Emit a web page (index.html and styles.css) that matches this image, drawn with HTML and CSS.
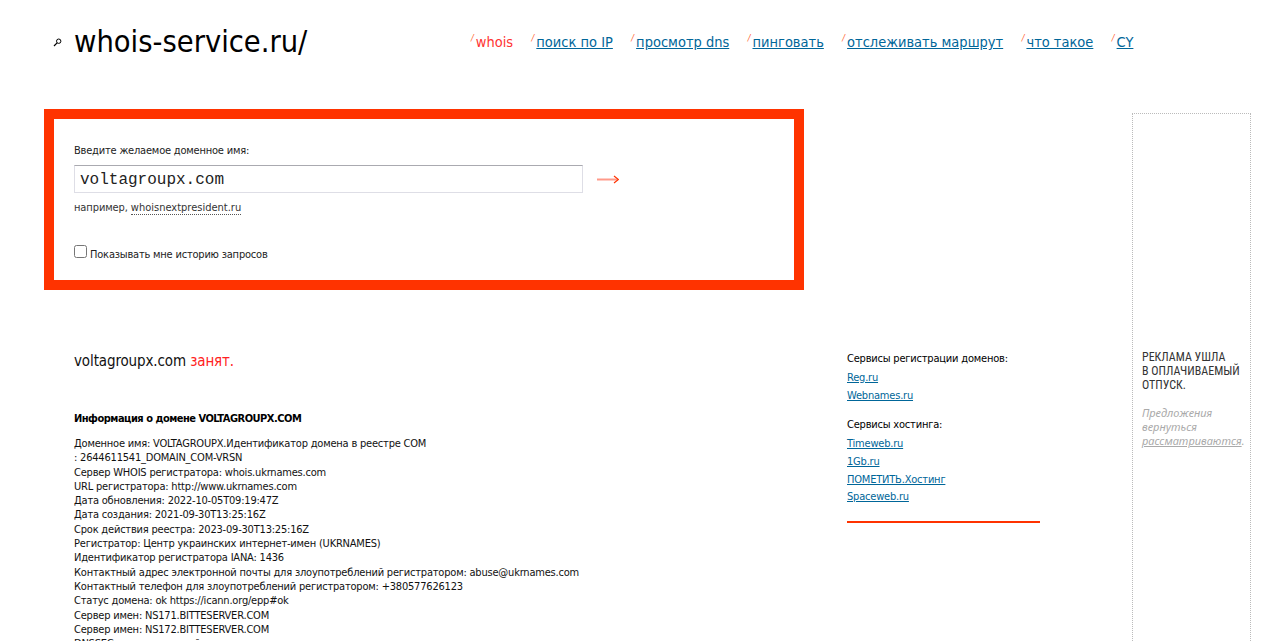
FILE: index.html
```html
<!DOCTYPE html>
<html lang="ru">
<head>
<meta charset="utf-8">
<title>whois-service.ru</title>
<link rel="stylesheet" href="styles.css">
</head>
<body>
<header class="header">
  <a class="logo" href="#">
    <svg class="logo-icon" width="9" height="9" viewBox="0 0 9 9"><circle cx="5.7" cy="3.2" r="2.2" fill="none" stroke="#000" stroke-width="1"/><path d="M4.1 4.9L1 8" stroke="#000" stroke-width="1.2"/></svg>
    <span class="logo-text">whois-service.ru/</span>
  </a>
  <nav class="nav">
    <span class="nav-item"><i class="slash">/</i><span class="current">whois</span></span>
    <span class="nav-item"><i class="slash">/</i><a href="#">поиск по IP</a></span>
    <span class="nav-item"><i class="slash">/</i><a href="#">просмотр dns</a></span>
    <span class="nav-item"><i class="slash">/</i><a href="#">пинговать</a></span>
    <span class="nav-item"><i class="slash">/</i><a href="#">отслеживать маршрут</a></span>
    <span class="nav-item"><i class="slash">/</i><a href="#">что такое</a></span>
    <span class="nav-item"><i class="slash">/</i><a href="#">CY</a></span>
  </nav>
</header>
<div class="page">
  <div class="left">
    <form class="search">
      <label class="search-label" for="domain">Введите желаемое доменное имя:</label>
      <div class="search-row">
        <input class="search-input" id="domain" type="text" value="voltagroupx.com">
        <svg class="arrow" width="22" height="9" viewBox="0 0 22 9"><path d="M0 4.5H21" stroke="#ff9a8a" stroke-width="2"/><path d="M17 1L21.5 4.5L17 8" fill="none" stroke="#ff3300" stroke-width="1.2"/></svg>
      </div>
      <p class="example">например, <a href="#">whoisnextpresident.ru</a></p>
      <label class="history"><input type="checkbox"><span>Показывать мне историю запросов</span></label>
    </form>
    <main class="result">
      <h1 class="status">voltagroupx.com <span class="busy">занят.</span></h1>
      <h2 class="info-title">Информация о домене VOLTAGROUPX.COM</h2>
      <p class="info">Доменное имя: VOLTAGROUPX.Идентификатор домена в реестре COM<br>
: 2644611541_DOMAIN_COM-VRSN<br>
Сервер WHOIS регистратора: whois.ukrnames.com<br>
URL регистратора: http://www.ukrnames.com<br>
Дата обновления: 2022-10-05T09:19:47Z<br>
Дата создания: 2021-09-30T13:25:16Z<br>
Срок действия реестра: 2023-09-30T13:25:16Z<br>
Регистратор: Центр украинских интернет-имен (UKRNAMES)<br>
Идентификатор регистратора IANA: 1436<br>
Контактный адрес электронной почты для злоупотреблений регистратором: abuse@ukrnames.com<br>
Контактный телефон для злоупотреблений регистратором: +380577626123<br>
Статус домена: ok https://icann.org/epp#ok<br>
Сервер имен: NS171.BITTESERVER.COM<br>
Сервер имен: NS172.BITTESERVER.COM<br>
DNSSEC: неподписанный</p>
    </main>
  </div>
  <aside class="services">
    <h3 class="services-title">Сервисы регистрации доменов:</h3>
    <a class="service" href="#">Reg.ru</a>
    <a class="service" href="#">Webnames.ru</a>
    <h3 class="services-title second">Сервисы хостинга:</h3>
    <a class="service" href="#">Timeweb.ru</a>
    <a class="service" href="#">1Gb.ru</a>
    <a class="service" href="#">ПОМЕТИТЬ.Хостинг</a>
    <a class="service" href="#">Spaceweb.ru</a>
    <div class="rule"></div>
  </aside>
  <aside class="ad">
    <p class="ad-title">РЕКЛАМА УШЛА<br>В ОПЛАЧИВАЕМЫЙ<br>ОТПУСК.</p>
    <p class="ad-note">Предложения вернуться <a href="#">рассматриваются</a>.</p>
  </aside>
</div>
</body>
</html>
```
FILE: styles.css
```css
html, body { margin: 0; padding: 0; height: 641px; overflow: hidden; background: #fff; }
body { font-family: "DejaVu Sans Condensed", "DejaVu Sans", sans-serif; font-stretch: condensed; font-size: 11px; letter-spacing: -0.2px; color: #000; }
a { color: #006699; }

.header { display: flex; height: 109px; box-sizing: border-box; padding: 22px 0 0 53px; align-items: flex-start; letter-spacing: 0; }
.logo { display: flex; align-items: center; color: #000; text-decoration: none; width: 418px; flex: none; }
.logo-icon { margin-right: 12px; }
.logo-text { font-size: 30.5px; line-height: 40px; }
.nav { display: flex; gap: 18.5px; margin-top: 9px; font-size: 14.5px; line-height: 22px; }
.nav-item { display: flex; }
.slash { color: #ff6633; font-size: 9px; line-height: 14px; margin-right: 2px; font-style: italic; }
.current { color: #ff3333; }

.page { display: flex; align-items: flex-start; padding-left: 44px; }
.left { width: 760px; flex: none; }
.search { border: 10px solid #ff3300; height: 181px; box-sizing: border-box; padding: 24px 20px 0; }
.search-label { display: block; line-height: 15px; color: #222; }
.search-row { display: flex; align-items: center; margin-top: 7px; }
.search-input { width: 509px; height: 28px; box-sizing: border-box; padding: 1px 6px 0 5px; border: 1px solid #dedee6; border-top-color: #aaaab0; font: 16px "Liberation Mono", monospace; color: #222; outline: none; }
.arrow { margin-left: 14px; }
.example { margin: 7px 0 0; line-height: 15px; color: #333; letter-spacing: -0.1px; }
.example a { color: #333; text-decoration: none; border-bottom: 1px dotted #555; letter-spacing: 0; }
.history { display: flex; align-items: center; margin-top: 30px; color: #222; }
.history input { margin: 0 3px 5px 0; width: 13px; height: 13px; }

.result { padding: 61px 0 0 30px; }
.status { margin: 0; font-size: 15px; font-weight: 400; line-height: 20px; color: #111; letter-spacing: -0.12px; }
.busy { color: #ff2222; }
.info-title { margin: 40px 0 0; font-size: 11px; line-height: 15px; font-weight: 700; letter-spacing: -0.5px; }
.info { margin: 11px 0 0; line-height: 14.3px; color: #111; }

.services { width: 193px; flex: none; margin: 242px 0 0 43px; display: flex; flex-direction: column; align-items: flex-start; }
.services-title { margin: 0 0 4px; font-size: 11px; line-height: 15px; font-weight: 400; }
.services-title.second { margin-top: 12px; }
.service { line-height: 15px; margin-bottom: 2.7px; }
.rule { align-self: stretch; height: 2px; background: #ff3300; margin-top: 14px; }

.ad { width: 119px; height: 528px; flex: none; margin: 4px 0 0 92px; box-sizing: border-box; border: 1px dotted #bbb; border-bottom: none; padding: 236px 9px 0; }
.ad-title { margin: 0; font-family: Roboto, sans-serif; font-stretch: 85%; font-size: 12px; line-height: 14px; color: #333; letter-spacing: 0; white-space: nowrap; }
.ad-note { margin: 14px 0 0; font-family: "Noto Sans", sans-serif; font-stretch: normal; letter-spacing: 0; font-style: italic; line-height: 14px; color: #aaa; }
.ad-note a { color: #aaa; }
```
